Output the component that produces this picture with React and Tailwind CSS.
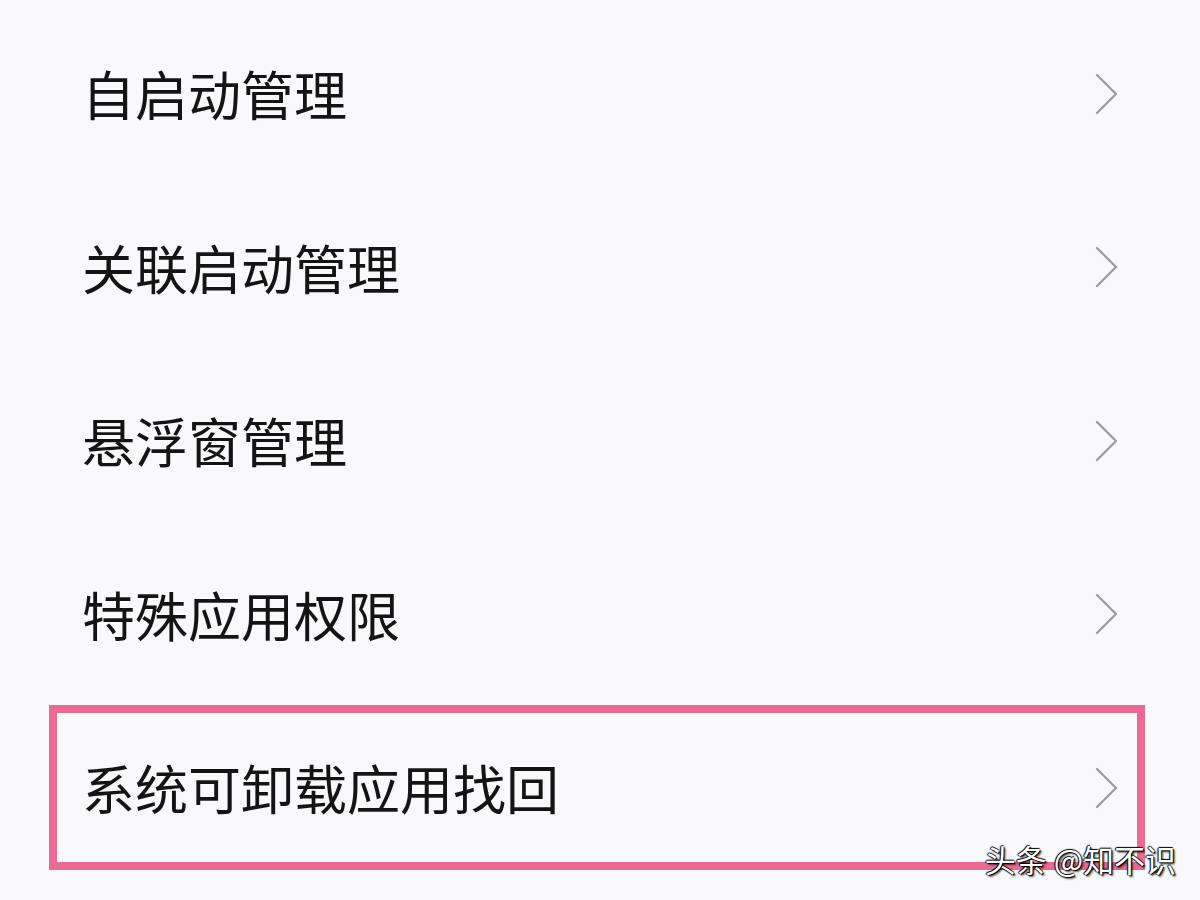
const items = ["自启动管理", "关联启动管理", "悬浮窗管理", "特殊应用权限", "系统可卸载应用找回"];

const Chevron = () => (
    <svg width="26" height="44" viewBox="0 0 26 44" fill="none" className="shrink-0">
        <path d="M3 3 L22 22 L3 41" stroke="#9a9a9c" strokeWidth="2.2" strokeLinecap="round" strokeLinejoin="round" />
    </svg>
);

export default function App() {
    return (
        <div
            className="relative w-[1200px] h-[900px] overflow-hidden bg-[#f9f9fb] pt-[7px]"
            style={{ fontFamily: "'Noto Sans CJK SC', 'Noto Sans', sans-serif" }}
        >
            {items.map((label, i) => (
                <div key={label} className="relative flex h-[173.5px] items-center justify-between pl-[82px] pr-[80px]">
                    <span className="text-[53px] leading-none text-[#141414]">{label}</span>
                    <Chevron />
                    {/* highlight box on the last row */}
                    {i === items.length - 1 && (
                        <div className="absolute left-[49px] top-[4px] h-[165px] w-[1096px] border-[8px] border-[#ea6a93]" />
                    )}
                </div>
            ))}

            {/* watermark */}
            <div
                className="absolute right-[24px] top-[843px] text-[31px] leading-none text-white"
                style={{ textShadow: "1px 1px 1px #000, -1px 0 1px #000, 0 -1px 1px #000, 2px 2px 2px rgba(0,0,0,0.6)" }}
            >
                头条 @知不识
            </div>
        </div>
    );
}
